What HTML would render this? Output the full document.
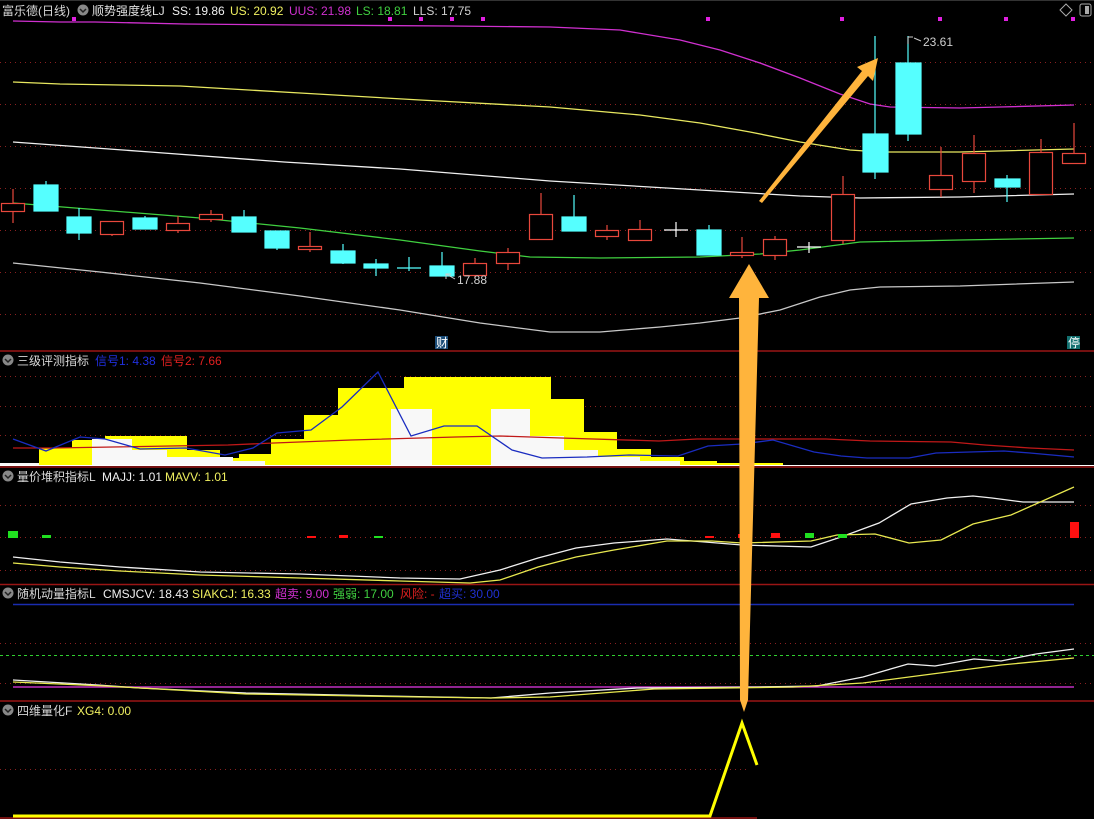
<!DOCTYPE html>
<html><head><meta charset="utf-8"><style>
html,body{margin:0;padding:0;background:#000;}
svg{display:block;}
text{font-family:"Liberation Sans","Noto Sans CJK SC",sans-serif;font-size:12px;}
</style></head><body>
<svg width="1094" height="819" viewBox="0 0 1094 819" xmlns="http://www.w3.org/2000/svg">
<rect width="1094" height="819" fill="#000"/>
<g stroke="#8a2020" stroke-width="1" stroke-dasharray="1,4">
<line x1="0" y1="62.5" x2="1094" y2="62.5"/><line x1="0" y1="104.5" x2="1094" y2="104.5"/>
<line x1="0" y1="146.5" x2="1094" y2="146.5"/><line x1="0" y1="188.5" x2="1094" y2="188.5"/>
<line x1="0" y1="230.5" x2="1094" y2="230.5"/><line x1="0" y1="272.5" x2="1094" y2="272.5"/>
<line x1="0" y1="314.5" x2="1094" y2="314.5"/>
<line x1="0" y1="376.5" x2="1094" y2="376.5"/><line x1="0" y1="406.5" x2="1094" y2="406.5"/><line x1="0" y1="435.5" x2="1094" y2="435.5"/>
<line x1="0" y1="505.5" x2="1094" y2="505.5"/><line x1="0" y1="537.5" x2="1094" y2="537.5"/><line x1="0" y1="570.5" x2="1094" y2="570.5"/>
<line x1="0" y1="643.5" x2="1094" y2="643.5"/><line x1="0" y1="683.5" x2="1094" y2="683.5"/>
<line x1="0" y1="769.5" x2="750" y2="769.5"/>
</g>
<g stroke="#9a1515" stroke-width="1.5">
<line x1="0" y1="351" x2="1094" y2="351"/><line x1="0" y1="467" x2="1094" y2="467"/>
<line x1="0" y1="584.5" x2="1094" y2="584.5"/><line x1="0" y1="701" x2="1094" y2="701"/>
<line x1="0" y1="818" x2="757" y2="818"/>
</g>
<line x1="0" y1="0.5" x2="1094" y2="0.5" stroke="#333"/>

<g fill="none" stroke-width="1.3">
<polyline stroke="#d030d0" points="13,21 60,22 95,22 185,24 300,25 450,26 550,27 620,30 680,40 720,50 760,63 800,78 840,94 870,104 890,107 960,108 1000,107 1074,105"/>
<polyline stroke="#e8e860" points="13,82 60,84 180,86 300,93 420,100 550,107 640,115 700,123 750,132 800,142 850,150 880,152 960,152 1074,149"/>
<polyline stroke="#f0f0f0" points="13,142 150,152 284,162 400,169 550,181 700,190 800,196 860,198 960,197 1074,194"/>
<polyline stroke="#40d040" points="13,203 100,210 200,218 300,228 400,240 480,251 530,257 600,258 700,257 760,254 800,250 830,246 860,242 960,240 1074,238"/>
<polyline stroke="#c8c8c8" points="13,263 100,272 200,283 300,296 400,310 480,323 550,332 600,332 660,327 700,323 740,318 780,310 820,297 850,290 880,287 960,286 1074,282"/>
</g>
<g fill="#e020e0">
<rect x="72" y="17" width="4" height="4"/><rect x="388" y="17" width="4" height="4"/><rect x="419" y="17" width="4" height="4"/><rect x="450" y="17" width="4" height="4"/><rect x="481" y="17" width="4" height="4"/>
<rect x="706" y="17" width="4" height="4"/><rect x="840" y="17" width="4" height="4"/><rect x="938" y="17" width="4" height="4"/><rect x="1004" y="17" width="4" height="4"/><rect x="1071" y="17" width="4" height="4"/>
</g>

<g stroke-width="1.2">
<g stroke="#e8483c" fill="#000">
<line x1="13" y1="189" x2="13" y2="223"/><rect x="1.5" y="203.5" width="23" height="8"/>
<line x1="112" y1="221" x2="112" y2="236"/><rect x="100.5" y="221.5" width="23" height="13"/>
<line x1="178" y1="216" x2="178" y2="233"/><rect x="166.5" y="223.5" width="23" height="7"/>
<line x1="211" y1="210" x2="211" y2="222"/><rect x="199.5" y="214.5" width="23" height="5"/>
<line x1="310" y1="232" x2="310" y2="252"/><rect x="298.5" y="246.5" width="23" height="3"/>
<line x1="475" y1="258" x2="475" y2="278"/><rect x="463.5" y="263.5" width="23" height="12"/>
<line x1="508" y1="248" x2="508" y2="270"/><rect x="496.5" y="252.5" width="23" height="11"/>
<line x1="541" y1="193" x2="541" y2="240"/><rect x="529.5" y="214.5" width="23" height="25"/>
<line x1="607" y1="225" x2="607" y2="240"/><rect x="595.5" y="230.5" width="23" height="6"/>
<line x1="640" y1="220" x2="640" y2="241"/><rect x="628.5" y="229.5" width="23" height="11"/>
<line x1="742" y1="237" x2="742" y2="258"/><rect x="730.5" y="252.5" width="23" height="3"/>
<line x1="775" y1="236" x2="775" y2="260"/><rect x="763.5" y="239.5" width="23" height="16"/>
<line x1="843" y1="176" x2="843" y2="244"/><rect x="831.5" y="194.5" width="23" height="46"/>
<line x1="941" y1="147" x2="941" y2="197"/><rect x="929.5" y="175.5" width="23" height="14"/>
<line x1="974" y1="135" x2="974" y2="193"/><rect x="962.5" y="153.5" width="23" height="28"/>
<line x1="1041" y1="139" x2="1041" y2="194"/><rect x="1029.5" y="152.5" width="23" height="42"/>
<line x1="1074" y1="123" x2="1074" y2="163"/><rect x="1062.5" y="153.5" width="23" height="10"/>
</g>
<g stroke="#55ffff" fill="#55ffff">
<line x1="46" y1="181" x2="46" y2="211"/><rect x="34" y="185" width="24" height="26"/>
<line x1="79" y1="208" x2="79" y2="240"/><rect x="67" y="217" width="24" height="16"/>
<line x1="145" y1="216" x2="145" y2="229"/><rect x="133" y="218" width="24" height="11"/>
<line x1="244" y1="210" x2="244" y2="232"/><rect x="232" y="217" width="24" height="15"/>
<line x1="277" y1="231" x2="277" y2="250"/><rect x="265" y="231" width="24" height="17"/>
<line x1="343" y1="244" x2="343" y2="264"/><rect x="331" y="251" width="24" height="12"/>
<line x1="376" y1="259" x2="376" y2="276"/><rect x="364" y="264" width="24" height="4"/>
<line x1="409" y1="257" x2="409" y2="271"/><line x1="397" y1="268" x2="421" y2="268"/>
<line x1="442" y1="252" x2="442" y2="276"/><rect x="430" y="266" width="24" height="10"/>
<line x1="574" y1="195" x2="574" y2="231"/><rect x="562" y="217" width="24" height="14"/>
<line x1="709" y1="225" x2="709" y2="255"/><rect x="697" y="230" width="24" height="25"/>
<line x1="875" y1="36" x2="875" y2="179"/><rect x="863" y="134" width="25" height="38"/>
<line x1="908" y1="36" x2="908" y2="141"/><rect x="896" y="63" width="25" height="71"/>
<line x1="1007" y1="175" x2="1007" y2="202"/><rect x="995" y="179" width="25" height="8"/>
</g>
<g stroke="#fff">
<line x1="676" y1="222" x2="676" y2="237"/><line x1="664" y1="230" x2="688" y2="230"/>
<line x1="809" y1="242" x2="809" y2="253"/><line x1="797" y1="247" x2="821" y2="247"/>
</g>
</g>
<path d="M908 37 L908 44 M908 37 L913 37 M914 38 L921 41" stroke="#ccc" fill="none"/>
<text x="923" y="46" fill="#cfcfcf">23.61</text>
<path d="M446 279 L446 274 L451 274 M446 274 L455 279" stroke="#ccc" fill="none"/>
<text x="457" y="284" fill="#cfcfcf">17.88</text>
<rect x="435" y="336" width="13" height="13" fill="#1c4d78"/><text x="436" y="347" fill="#fff">财</text>
<rect x="1067" y="336" width="13" height="13" fill="#137070"/><text x="1068" y="347" fill="#fff">停</text>
<path d="M1066 4 L1072 10 L1066 16 L1060 10 Z" fill="none" stroke="#aaa"/>
<rect x="1080" y="4" width="11" height="12" rx="2" fill="none" stroke="#aaa"/><rect x="1085" y="6" width="4" height="8" fill="#aaa"/>

<g>
<text x="2" y="15" fill="#d8d8d8">富乐德(日线)</text>
<circle cx="83" cy="10" r="5.5" fill="#888"/><path d="M80 9 L83 12 L86 9" stroke="#222" stroke-width="1.5" fill="none"/>
<text x="92" y="15" fill="#e0e0e0">顺势强度线LJ</text>
<text x="172" y="15" fill="#f0f0f0">SS: 19.86</text>
<text x="230" y="15" fill="#f0f060">US: 20.92</text>
<text x="289" y="15" fill="#d030d0">UUS: 21.98</text>
<text x="356" y="15" fill="#40d040">LS: 18.81</text>
<text x="413" y="15" fill="#d0d0d0">LLS: 17.75</text>
</g>

<g fill="#ffff00">
<rect x="39" y="448" width="33" height="18"/><rect x="72" y="440" width="33" height="26"/>
<rect x="105" y="436" width="82" height="30"/><rect x="187" y="450" width="33" height="16"/>
<rect x="220" y="458" width="19" height="8"/><rect x="239" y="454" width="32" height="12"/>
<rect x="271" y="439" width="33" height="27"/><rect x="304" y="415" width="34" height="51"/>
<rect x="338" y="388" width="66" height="78"/><rect x="404" y="377" width="147" height="89"/>
<rect x="551" y="399" width="33" height="67"/><rect x="584" y="432" width="33" height="34"/>
<rect x="617" y="449" width="34" height="17"/><rect x="651" y="457" width="33" height="9"/>
<rect x="684" y="461" width="33" height="5"/><rect x="717" y="463" width="66" height="3"/>
</g>
<g fill="#f8f8f8">
<rect x="0" y="463" width="39" height="3"/><rect x="92" y="439" width="40" height="27"/>
<rect x="132" y="450" width="35" height="16"/><rect x="167" y="457" width="66" height="9"/>
<rect x="233" y="461" width="32" height="5"/>
<rect x="391" y="409" width="41" height="57"/><rect x="491" y="409" width="39" height="57"/>
<rect x="530" y="436" width="34" height="30"/><rect x="564" y="450" width="34" height="16"/>
<rect x="598" y="457" width="42" height="9"/><rect x="640" y="461" width="40" height="5"/>
</g>
<line x1="0" y1="465.5" x2="1094" y2="465.5" stroke="#fff"/>
<polyline fill="none" stroke="#c01818" stroke-width="1.3" points="13,448 53,448 228,445 274,443 351,440 456,437 500,436 561,438 659,441 697,439 826,439 870,441 951,442 985,445 1030,448 1074,450"/>
<polyline fill="none" stroke="#1a2cc0" stroke-width="1.3" points="13,439 46,451 80,437 105,439 140,449 186,448 225,455 253,448 277,433 311,430 342,407 378,372 411,436 444,426 477,426 512,450 542,458 587,457 629,455 678,456 708,446 742,444 773,440 814,452 841,456 867,458 909,458 936,453 1004,451 1030,453 1074,457"/>
<circle cx="8" cy="360" r="5.5" fill="#888"/><path d="M5 359 L8 362 L11 359" stroke="#222" stroke-width="1.5" fill="none"/>
<text x="17" y="365" fill="#d8d8d8">三级评测指标</text>
<text x="95" y="365" fill="#2030e0">信号1: 4.38</text>
<text x="161" y="365" fill="#e02020">信号2: 7.66</text>

<polyline fill="none" stroke="#f0f0f0" stroke-width="1.3" points="13,557 60,562 120,567 200,572 300,574 400,578 460,579 500,570 538,558 576,548 614,543 667,539 705,542 742,545 811,547 841,537 879,523 911,504 947,498 973,496 992,498 1023,502 1074,502"/>
<polyline fill="none" stroke="#e8e850" stroke-width="1.3" points="13,563 60,567 120,571 200,575 300,578 400,581 470,583 500,580 538,567 576,557 614,550 667,541 712,541 742,543 811,541 837,535 875,534 909,543 941,540 973,524 1011,515 1074,487"/>
<g fill="#20e020"><rect x="8" y="531" width="10" height="7"/><rect x="42" y="535" width="9" height="3"/><rect x="374" y="536" width="9" height="2"/><rect x="805" y="533" width="9" height="5"/><rect x="838" y="534" width="9" height="4"/></g>
<g fill="#ff1010"><rect x="307" y="536" width="9" height="2"/><rect x="339" y="535" width="9" height="3"/><rect x="705" y="536" width="9" height="2"/><rect x="738" y="534" width="6" height="4"/><rect x="771" y="533" width="9" height="5"/><rect x="1070" y="522" width="9" height="16"/></g>
<circle cx="8" cy="476" r="5.5" fill="#888"/><path d="M5 475 L8 478 L11 475" stroke="#222" stroke-width="1.5" fill="none"/>
<text x="17" y="481" fill="#d8d8d8">量价堆积指标L</text>
<text x="102" y="481" fill="#f0f0f0">MAJJ: 1.01</text>
<text x="165" y="481" fill="#f0f060">MAVV: 1.01</text>

<line x1="13" y1="604.5" x2="1074" y2="604.5" stroke="#1a2cb0" stroke-width="1.5"/>
<line x1="0" y1="655.5" x2="1094" y2="655.5" stroke="#30d030" stroke-dasharray="3,3"/>
<line x1="13" y1="687" x2="1074" y2="687" stroke="#c030c0" stroke-width="1.5"/>
<polyline fill="none" stroke="#f0f0f0" stroke-width="1.3" points="13,680 98,685 140,688 246,693 386,696 491,698 550,693 637,688 758,687 817,686 863,677 908,664 935,666 974,659 1001,661 1036,654 1074,649"/>
<polyline fill="none" stroke="#e8e850" stroke-width="1.3" points="13,682 105,686 246,694 421,697 491,698 550,697 654,689 793,687 863,683 932,674 1001,665 1074,658"/>
<circle cx="8" cy="593" r="5.5" fill="#888"/><path d="M5 592 L8 595 L11 592" stroke="#222" stroke-width="1.5" fill="none"/>
<text x="17" y="598" fill="#d8d8d8">随机动量指标L</text>
<text x="103" y="598" fill="#f0f0f0">CMSJCV: 18.43</text>
<text x="192" y="598" fill="#f0f060">SIAKCJ: 16.33</text>
<text x="275" y="598" fill="#d030d0">超卖: 9.00</text>
<text x="333" y="598" fill="#40d040">强弱: 17.00</text>
<text x="400" y="598" fill="#e02020">风险: -</text>
<text x="439" y="598" fill="#2030d0">超买: 30.00</text>

<polyline fill="none" stroke="#ffff00" stroke-width="3" points="13,816 710,816 742,723 757,765"/>
<circle cx="8" cy="710" r="5.5" fill="#888"/><path d="M5 709 L8 712 L11 709" stroke="#222" stroke-width="1.5" fill="none"/>
<text x="17" y="715" fill="#d8d8d8">四维量化F</text>
<text x="77" y="715" fill="#f0f060">XG4: 0.00</text>

<polygon fill="#ffb43c" points="749,264 769,298 759,298 748,700 744,712 740,700 739,298 729,298"/>
<polygon fill="#ffb43c" points="759,201 762,203 868,76 873,81 878,58 857,67 862,71"/>
</svg>
</body></html>
